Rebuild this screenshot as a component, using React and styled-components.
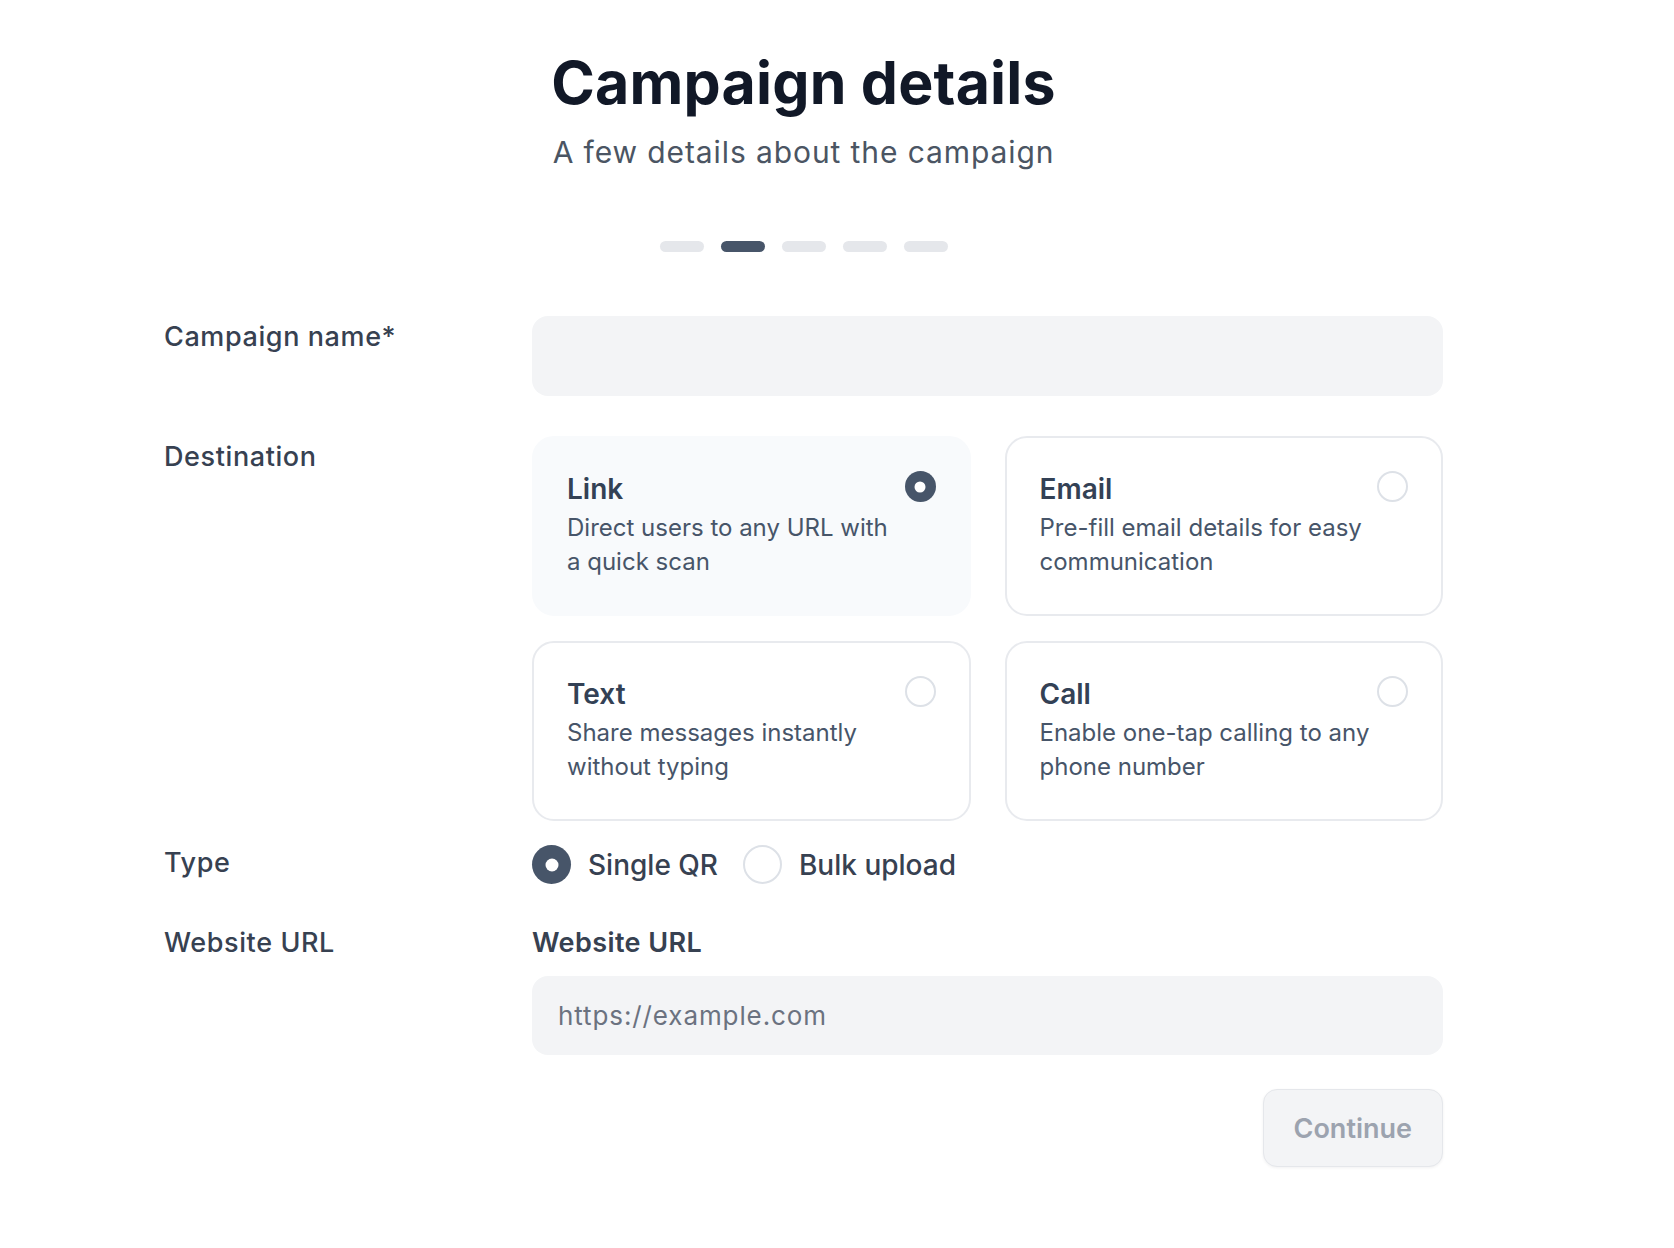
import React, { useState } from "react";
import styled, { createGlobalStyle } from "styled-components";

const GlobalStyle = createGlobalStyle`
  body {
    margin: 0;
    background: #ffffff;
    font-family: Inter, "Noto Sans", sans-serif;
    -webkit-font-smoothing: antialiased;
  }
  * {
    box-sizing: border-box;
  }
`;

const destinations = [
  { id: "link", title: "Link", desc: "Direct users to any URL with a quick scan" },
  { id: "email", title: "Email", desc: "Pre-fill email details for easy communication" },
  { id: "text", title: "Text", desc: "Share messages instantly without typing" },
  { id: "call", title: "Call", desc: "Enable one-tap calling to any phone number" },
];

export default function App() {
  const [destination, setDestination] = useState("link");
  const [type, setType] = useState("single");

  return (
    <>
      <GlobalStyle />
      <Page>
        <Header>
          <Title>Campaign details</Title>
          <Subtitle>A few details about the campaign</Subtitle>
        </Header>

        <Steps>
          {[0, 1, 2, 3, 4].map(i => (
            <Step key={i} $active={i === 1} />
          ))}
        </Steps>

        <Form>
          <Row>
            <Label $pt={5}>Campaign name*</Label>
            <TextInput type="text" />
          </Row>

          <Row $mt={40}>
            <Label $pt={5}>Destination</Label>
            <CardGrid>
              {destinations.map(d => (
                <Card
                  key={d.id}
                  $selected={destination === d.id}
                  onClick={() => setDestination(d.id)}
                >
                  <CardText>
                    <CardTitle>{d.title}</CardTitle>
                    <CardDesc>{d.desc}</CardDesc>
                  </CardText>
                  <Radio $size={31} $checked={destination === d.id} />
                </Card>
              ))}
            </CardGrid>
          </Row>

          <Row $mt={24}>
            <Label $pt={2}>Type</Label>
            <Options>
              <Option onClick={() => setType("single")}>
                <Radio $size={39} $checked={type === "single"} />
                <OptionText>Single QR</OptionText>
              </Option>
              <Option onClick={() => setType("bulk")}>
                <Radio $size={39} $checked={type === "bulk"} />
                <OptionText>Bulk upload</OptionText>
              </Option>
            </Options>
          </Row>

          <Row $mt={43}>
            <Label>Website URL</Label>
            <div>
              <SubLabel>Website URL</SubLabel>
              <TextInput type="text" placeholder="https://example.com" $mt={17} $h={79} />
            </div>
          </Row>

          <Actions>
            <ContinueButton disabled>Continue</ContinueButton>
          </Actions>
        </Form>
      </Page>
    </>
  );
}

const Page = styled.div`
  width: 1279px;
  margin-left: 164px;
  padding: 48px 0 80px;
`;

const Header = styled.header`
  text-align: center;
`;

const Title = styled.h1`
  margin: 0;
  font-size: 59px;
  line-height: 69px;
  font-weight: 700;
  color: #111827;
  letter-spacing: 0.2px;
`;

const Subtitle = styled.p`
  margin: 17px 0 0;
  font-size: 30px;
  line-height: 36px;
  letter-spacing: 0.9px;
  color: #4b5563;
`;

const Steps = styled.div`
  display: flex;
  justify-content: center;
  gap: 17px;
  margin-top: 71px;
`;

const Step = styled.span`
  width: 44px;
  height: 11px;
  border-radius: 6px;
  background: ${p => (p.$active ? "#475569" : "#e5e7eb")};
`;

const Form = styled.div`
  margin-top: 64px;
  display: flex;
  flex-direction: column;
`;

const Row = styled.div`
  display: grid;
  grid-template-columns: 368px 1fr;
  align-items: start;
  margin-top: ${p => p.$mt || 0}px;
`;

const Label = styled.div`
  padding-top: ${p => p.$pt || 0}px;
  font-size: 27px;
  line-height: 32px;
  font-weight: 500;
  letter-spacing: 0.6px;
  color: #374151;
`;

const SubLabel = styled.div`
  font-size: 27px;
  line-height: 32px;
  font-weight: 600;
  letter-spacing: 0.4px;
  color: #374151;
`;

const TextInput = styled.input`
  display: block;
  width: 100%;
  height: ${p => p.$h || 80}px;
  margin-top: ${p => p.$mt || 0}px;
  padding: 0 26px;
  border: none;
  border-radius: 16px;
  background: #f3f4f6;
  font-family: inherit;
  font-size: 26px;
  letter-spacing: 0.9px;
  color: #111827;
  outline: none;

  &::placeholder {
    color: #6b7280;
  }
`;

const CardGrid = styled.div`
  display: grid;
  grid-template-columns: 1fr 1fr;
  gap: 25px 34px;
`;

const Card = styled.div`
  display: flex;
  align-items: flex-start;
  gap: 3px;
  padding: 33px 33px 35px;
  border: 2px solid ${p => (p.$selected ? "#f8fafc" : "#e8eaee")};
  border-radius: 22px;
  background: ${p => (p.$selected ? "#f8fafc" : "#ffffff")};
  cursor: pointer;
`;

const CardText = styled.div`
  flex: 1;
  min-width: 0;
`;

const CardTitle = styled.div`
  font-size: 28px;
  line-height: 36px;
  font-weight: 600;
  color: #334155;
`;

const CardDesc = styled.div`
  margin-top: 4px;
  font-size: 24px;
  line-height: 34px;
  color: #475569;
`;

const Radio = styled.span`
  position: relative;
  flex-shrink: 0;
  width: ${p => p.$size}px;
  height: ${p => p.$size}px;
  border-radius: 50%;
  background: ${p => (p.$checked ? "#475569" : "#ffffff")};
  border: ${p => (p.$checked ? "none" : "2px solid #dde1e7")};

  &::after {
    content: "";
    display: ${p => (p.$checked ? "block" : "none")};
    position: absolute;
    top: 50%;
    left: 50%;
    width: ${p => Math.round(p.$size * 0.34)}px;
    height: ${p => Math.round(p.$size * 0.34)}px;
    border-radius: 50%;
    background: #ffffff;
    transform: translate(-50%, -50%);
  }
`;

const Options = styled.div`
  display: flex;
  align-items: center;
  gap: 25px;
`;

const Option = styled.label`
  display: flex;
  align-items: center;
  gap: 17px;
  cursor: pointer;
`;

const OptionText = styled.span`
  font-size: 28px;
  line-height: 38px;
  font-weight: 500;
  color: #374151;
`;

const Actions = styled.div`
  display: flex;
  justify-content: flex-end;
  margin-top: 34px;
`;

const ContinueButton = styled.button`
  height: 78px;
  padding: 0 30px;
  border: 1px solid #e5e7eb;
  border-radius: 14px;
  background: #f3f4f6;
  box-shadow: 0 1px 3px rgba(15, 23, 42, 0.06);
  font-family: inherit;
  font-size: 27px;
  font-weight: 600;
  color: #9ca3af;
`;
